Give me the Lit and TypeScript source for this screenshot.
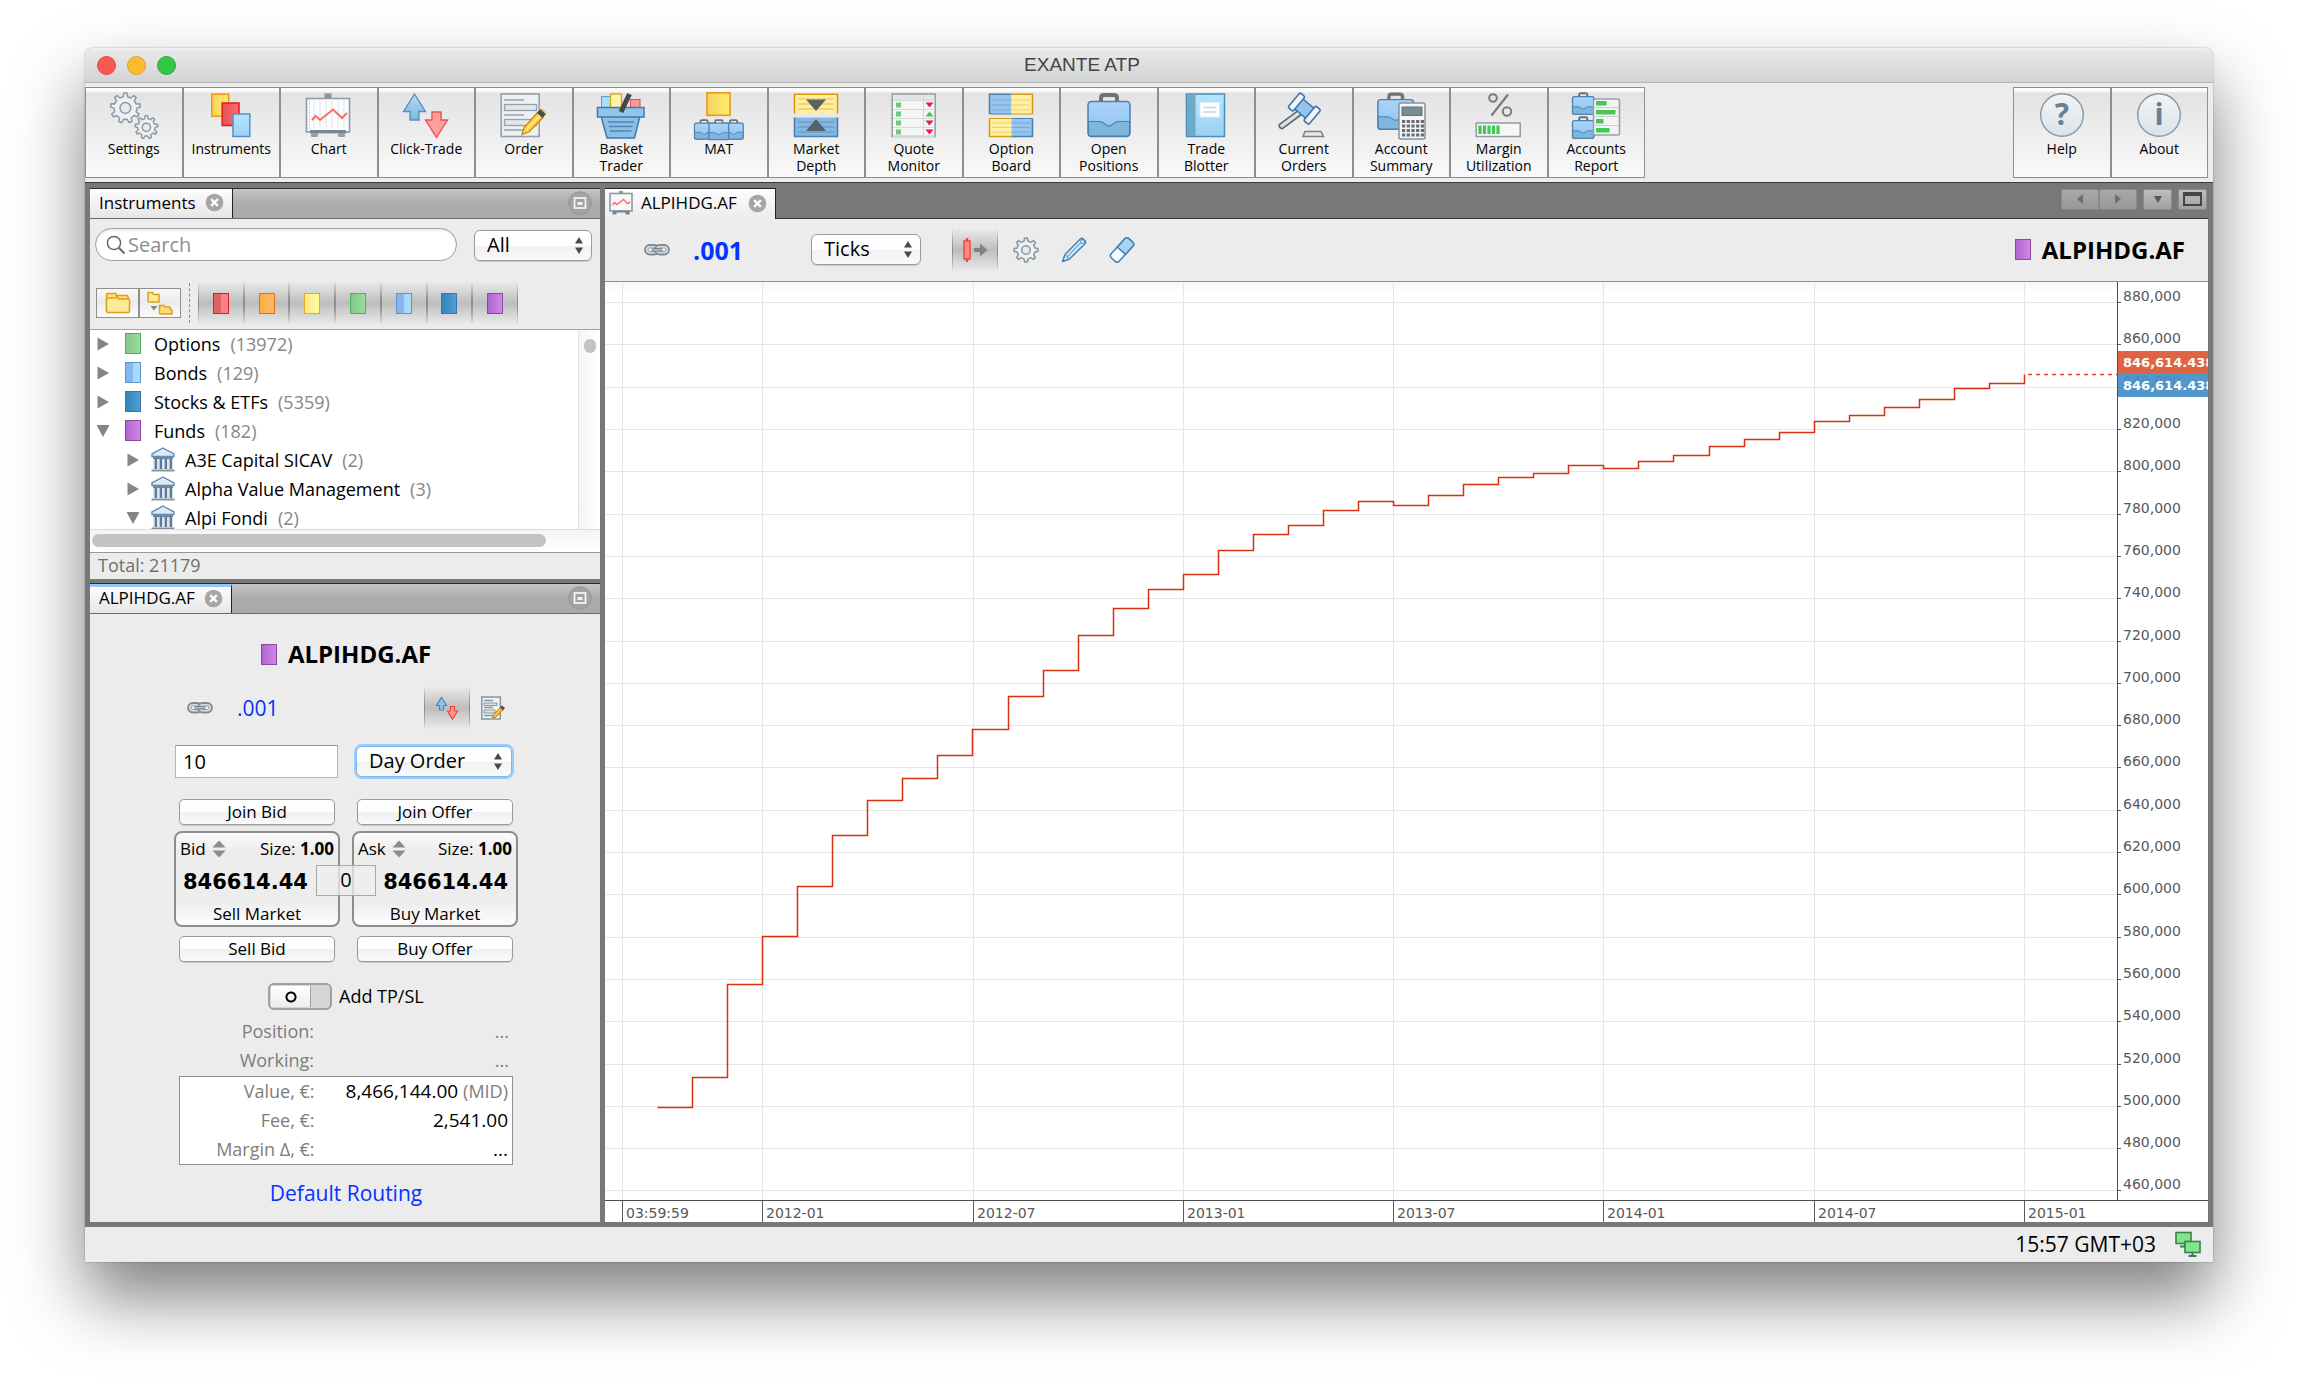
import { LitElement, html, svg, css } from "lit";
import { customElement, state } from "lit/decorators.js";
import { classMap } from "lit/directives/class-map.js";
import { styleMap } from "lit/directives/style-map.js";

/* ---------- icon helpers ---------- */

const gearPath = (cx: number, cy: number, r: number, teeth: number): string => {
  const inner = r * 0.76;
  const step = (Math.PI * 2) / teeth;
  let d = "";
  for (let i = 0; i < teeth; i++) {
    const a = i * step - Math.PI / 2;
    const pts: [number, number][] = [
      [inner, a - step * 0.27],
      [r, a - step * 0.15],
      [r, a + step * 0.15],
      [inner, a + step * 0.27],
    ];
    pts.forEach(([rad, ang], k) => {
      const x = (cx + rad * Math.cos(ang)).toFixed(2);
      const y = (cy + rad * Math.sin(ang)).toFixed(2);
      d += i === 0 && k === 0 ? `M${x} ${y}` : k === 0 ? `A${inner} ${inner} 0 0 1 ${x} ${y}` : `L${x} ${y}`;
    });
  }
  return d + "Z";
};

const gear = (cx: number, cy: number, r: number, teeth: number, w = 1.5) => svg`
  <path d=${gearPath(cx, cy, r, teeth)} fill="#eef1f3" stroke="#8b9aa5" stroke-width=${w} stroke-linejoin="round"/>
  <circle cx=${cx} cy=${cy} r=${r * 0.36} fill="#e9e9e9" stroke="#8b9aa5" stroke-width=${w}/>`;

const clickArrows = svg`
  <path d="M12.5 2 23.5 19.5H17V28H8V19.5H1.5Z" fill="url(#gBlueArrow)" stroke="#5b8fb9" stroke-width="1.4"/>
  <path d="M34.5 45.5 45.5 28H39V20H30V28H23.5Z" fill="#ffa0a0" stroke="#f0504c" stroke-width="1.4"/>`;

const orderSheet = svg`
  <rect x="1.2" y="2" width="38" height="42.5" fill="#eef0f1" stroke="#93a2ad" stroke-width="1.6"/>
  <path d="M4 8H24M4 23H24M4 38H24" stroke="#93a2ad" stroke-width="1.6"/>
  <rect x="4.5" y="12.5" width="32" height="6" fill="#e2e6e9" stroke="#93a2ad" stroke-width="1.3"/>
  <rect x="4.5" y="27.5" width="32" height="6" fill="#e2e6e9" stroke="#93a2ad" stroke-width="1.3"/>
  <path d="M22 42.5 24 35.5 37.5 20.5 43 25.5 29 40Z" fill="#fbd04a" stroke="#c08d14" stroke-width="1.3"/>
  <path d="M26.5 38 40.2 23" stroke="#fff0a0" stroke-width="1.2"/>
  <path d="M37 21 40.5 17 46 22 42.5 26Z" fill="#4b4b4b"/>
  <path d="M41.5 17 45.5 21" stroke="#e9b93a" stroke-width="1.6"/>`;

const chartBoard = svg`
  <rect x="19.5" y="1.5" width="7" height="6" fill="#8796a0"/>
  <rect x="1.5" y="6.5" width="43" height="33.5" fill="#fdfdfd" stroke="#8d9ca7" stroke-width="1.6"/>
  <path d="M9 8.5V37M15 8.5V37M21 8.5V37M27 8.5V37M33 8.5V37M39 8.5V37" stroke="#e0e3e6" stroke-width="1"/>
  <path d="M4.5 8.5V37" stroke="#9aa7b0" stroke-width="1" stroke-dasharray="1 2"/>
  <path d="M7 28 10.5 24 15 28 28 17.5 37 26 42 21" fill="none" stroke="#ff6b66" stroke-width="2"/>
  <rect x="5" y="38" width="36" height="3.4" fill="#79868f"/>
  <rect x="6" y="41" width="7" height="4" rx="1" fill="#93a0a9"/>
  <rect x="33" y="41" width="7" height="4" rx="1" fill="#93a0a9"/>`;

/* Bolder cuts of the three icons above, for the 24px size. */
const smallArrows = svg`
  <path d="M6.500 1.500 11.500 9.500H8.500V14H4.500V9.500H1.500Z" fill="#8fc3e8" stroke="#4f86b5" stroke-width="1.200"/>
  <path d="M17.500 23 22.500 15H19.500V10.500H15.500V15H12.500Z" fill="#ff9c98" stroke="#ee3f3a" stroke-width="1.200"/>`;

const smallSheet = svg`
  <rect x="0.800" y="1" width="18.500" height="22" fill="#f0f2f3" stroke="#8596a2" stroke-width="1.500"/>
  <path d="M3 4.500H12M3 11.500H12M3 19.500H12" stroke="#8596a2" stroke-width="1.300"/>
  <path d="M3 7H16V9.500H3ZM3 14H14V17H3Z" fill="#dfe4e7" stroke="#8596a2" stroke-width="1"/>
  <path d="M11.500 22 12.500 18.500 19.500 11.500 22 14 15 21Z" fill="#f7bd33" stroke="#b58414" stroke-width="1"/>
  <path d="M19 11.500 21 9.500 24 12 22 14.500Z" fill="#4f4f4f"/>`;

const smallBoard = svg`
  <rect x="10" y="0" width="4" height="3" fill="#8796a0"/>
  <rect x="1" y="2.500" width="22" height="17.500" fill="#f8f8f8" stroke="#8d9ca7" stroke-width="1.600"/>
  <path d="M3.500 14 5.500 11.500 8 13.500 14.500 8.500 18.500 12.500 21 11" fill="none" stroke="#ff7069" stroke-width="1.500"/>
  <path d="M3.500 20.500H20.500" stroke="#79868f" stroke-width="2"/>
  <path d="M3.500 21H7.500V23.500H3.500ZM16.500 21H20.500V23.500H16.500Z" fill="#79868f"/>`;

const briefcase = (x: number, y: number, s: number, w: number) => svg`
  <g transform="translate(${x} ${y}) scale(${s})">
    <path d="M14 9V5.5Q14 2.5 17 2.5H27Q30 2.5 30 5.5V9" fill="none" stroke="#6f7376" stroke-width="4"/>
    <rect x="1" y="9" width="42" height="35" rx="3.5" fill="url(#gCase)" stroke="#4f7fb0" stroke-width=${w}/>
    <path d="M1.5 29H12Q16 29 18.5 32 22 35 25.500 32 28 29 32 29H42.500V41Q42 43.500 39.500 43.500H4.500Q1.500 43.500 1.500 41Z"
      fill="#7fb6dd" stroke="#4f7fb0" stroke-width=${w * 0.7}/>
  </g>`;

const glass = (glyph: string, size: number) => svg`
  <circle cx="24" cy="23" r="21.300" fill="url(#gGlass)" stroke="#8599a6" stroke-width="1.4"/>
  <text x="24" y="33" text-anchor="middle" font-family="Open Sans, sans-serif" font-weight="700" font-size=${size} fill="#678093">${glyph}</text>`;

const quoteRows = [1, 0, 1, 1].map((down, i) => {
  const y = 13 + i * 9;
  return svg`<rect x="6" y=${y - 2.500} width="5" height="5" fill="#6fc97a"/>
    <path d=${down ? `M35.500 ${y - 2.500}h8l-4 5z` : `M35.500 ${y + 2.500}h8l-4 -5z`} fill=${down ? "#f0134f" : "#45c158"}/>
    <path d="M3 ${y + 4.500}H45" stroke="#d2d7db" stroke-width="1"/>`;
});

const calcKeys = [0, 1, 2, 3].flatMap((r) =>
  [0, 1, 2, 3, 4].map((c) => svg`<rect x=${25 + c * 4.700} y=${28 + r * 4.500} width="3.200" height="3" fill="#666b70"/>`)
);

const toolIcons: Record<string, unknown> = {
  settings: svg`${gear(15.4, 16, 15, 9)}${gear(36.4, 35.3, 11.5, 9)}`,
  instruments: svg`
    <rect x="4.800" y="2.200" width="16.800" height="22" fill="url(#gYellow)" stroke="#f0960f" stroke-width="1.500"/>
    <rect x="15.200" y="11" width="16.800" height="22.500" fill="url(#gRed)" stroke="#dc1c1c" stroke-width="1.500"/>
    <rect x="26" y="22" width="16.800" height="22.500" fill="url(#gSky)" stroke="#5b8cc4" stroke-width="1.500"/>`,
  chart: chartBoard,
  click: clickArrows,
  order: orderSheet,
  basket: svg`
    <rect x="4.500" y="4.500" width="9" height="13" fill="#a9def8" stroke="#5aa0cf"/>
    <rect x="13.500" y="2" width="11" height="15" fill="#fff3a8" stroke="#d9a410" stroke-width="1.300"/>
    <rect x="33.500" y="7.500" width="9.500" height="10" fill="#ff9a9a" stroke="#e04848"/>
    <path d="M4 24H43L37.500 46H10Z" fill="#8dbfe5" stroke="#3f79ad" stroke-width="1.500"/>
    <rect x="0.500" y="15.500" width="46.500" height="9.500" fill="#93c5ea" stroke="#3f79ad" stroke-width="1.500"/>
    <path d="M11 30H37M12 34.500H35.500M13 39H34.500" stroke="#4b86b8" stroke-width="1.300"/>
    <path d="M32.500 2 24 20" stroke="#45484b" stroke-width="5"/>`,
  mat: svg`
    <rect x="12" y="0.800" width="23" height="22.500" fill="url(#gYellow)" stroke="#f0960f" stroke-width="1.600"/>
    ${briefcase(-1, 27, 0.46, 2.6)}${briefcase(28.500, 27, 0.46, 2.6)}${briefcase(13.500, 27, 0.470, 2.6)}`,
  depth: svg`
    <rect x="2.500" y="2" width="43" height="19.500" fill="#ffef9e"/>
    <path d="M2.500 21.500V2.200H45.500V21.500" fill="none" stroke="#d79b12" stroke-width="1.600"/>
    <path d="M6 7H42M6 12H42M6 17H42" stroke="#e6b94a" stroke-width="1"/>
    <rect x="2.500" y="25.500" width="43" height="19" fill="#86b9e0"/>
    <path d="M2.500 25.500V44.500H45.500V25.500" fill="none" stroke="#4d81ab" stroke-width="1.600"/>
    <path d="M6 30H42M6 35H42M6 40H42" stroke="#5b93c2" stroke-width="1"/>
    <path d="M14 7.500H34L24 19ZM14 39H34L24 27Z" fill="#566168"/>`,
  quote: svg`
    <rect x="2.200" y="2" width="43" height="42.500" fill="#f4f5f5" stroke="#93a2ad" stroke-width="1.600"/>
    <rect x="3.500" y="3" width="40.500" height="5.500" fill="#e1e5e8"/>
    <path d="M3 8.500H45M33.500 3V44" stroke="#d2d7db" stroke-width="1"/>
    ${quoteRows}`,
  option: svg`
    <rect x="2.500" y="2" width="22" height="20" fill="#97c5ee"/><rect x="24.500" y="2" width="21" height="20" fill="#fff0a3"/>
    <rect x="2.500" y="26.500" width="22" height="18" fill="#fff0a3"/><rect x="24.500" y="26.500" width="21" height="18" fill="#97c5ee"/>
    <path d="M5 8H24M5 13H24M5 18H24M25 31H43M25 35.500H43M25 40H43" stroke="#74a9da" stroke-width="1"/>
    <path d="M25 8H43M25 13H43M25 18H43M5 31H24M5 35.500H24M5 40H24" stroke="#ead06f" stroke-width="1"/>
    <path d="M2.500 22V2.200H24.500M24.500 44.500H45.500V26.500" fill="none" stroke="#4d81ab" stroke-width="1.600"/>
    <path d="M24.500 2.200H45.500V22M2.500 26.500V44.500H24.500" fill="none" stroke="#d79b12" stroke-width="1.600"/>
    <path d="M2.500 22H24.500M24.500 26.500H45.500" stroke="#4d81ab"/><path d="M24.500 22H45.500M2.500 26.500H24.500" stroke="#d79b12"/>`,
  positions: briefcase(2, 0.500, 1, 1.5),
  blotter: svg`
    <rect x="4.500" y="2" width="38" height="42.500" fill="url(#gSky)" stroke="#4b8db6" stroke-width="1.500"/>
    <rect x="5" y="2.500" width="8.500" height="41.500" fill="#6fa9c8"/>
    <rect x="18" y="10.500" width="19.500" height="14.500" fill="#fff" stroke="#d8ecf7"/>
    <path d="M21 15.500H34.500M21 20H34.500" stroke="#d0d4d6" stroke-width="1.500"/>`,
  orders: svg`
    <g transform="rotate(40 24 17)">
      <path d="M21 22 20.500 46Q23 48.500 25.500 46L26 22Z" transform="rotate(12 23 20)" fill="#dfe3e7" stroke="#5d6871" stroke-width="1.700"/>
      <rect x="16" y="10" width="16" height="13" fill="#93c4ee" stroke="#3d74ad" stroke-width="1.500"/>
      <rect x="10.500" y="7" width="6.500" height="19" rx="1.500" fill="#f1f5f9" stroke="#3d74ad" stroke-width="1.600"/>
      <rect x="31" y="7" width="6.500" height="19" rx="1.500" fill="#f1f5f9" stroke="#3d74ad" stroke-width="1.600"/>
    </g>
    <path d="M25 39.500H41L43.500 44.500H23Z" fill="#e6e8ea" stroke="#77818a" stroke-width="1.500"/>`,
  summary: svg`
    ${briefcase(0, 0, 0.850, 1.7)}
    <rect x="22" y="11" width="26" height="36" rx="2" fill="#f5f5f5" stroke="#84929c" stroke-width="1.500"/>
    <rect x="25" y="15" width="20" height="8.500" fill="#768e92" stroke="#5f7478"/>
    ${calcKeys}`,
  margin: svg`
    <path d="M33 2.500 16.500 23.500" stroke="#7a7a7a" stroke-width="2.200"/>
    <circle cx="18" cy="6" r="3.800" fill="none" stroke="#7a7a7a" stroke-width="2"/>
    <circle cx="32" cy="19.500" r="4.200" fill="none" stroke="#7a7a7a" stroke-width="2"/>
    <rect x="1.200" y="31" width="44" height="13.500" fill="#f7f7f7" stroke="#8d9ca7" stroke-width="1.500"/>
    <path d="M5 33.500V42M9.500 33.500V42M14 33.500V42M18.500 33.500V42M23 33.500V42" stroke="#40c94e" stroke-width="3.200"/>`,
  report: svg`
    ${briefcase(0, 0, 0.510, 2.6)}${briefcase(0, 24, 0.510, 2.6)}
    <rect x="21.500" y="7" width="26" height="36" rx="2" fill="#f3f3f3" stroke="#93a2ad" stroke-width="1.600"/>
    <path d="M22.500 15.500H47M22.500 24.500H47M22.500 33.500H47" stroke="#c9ced2"/>
    <path d="M24 11.200H34.500M24 20.200H43.500M24 29.300H31.500M24 38.300H37.500" stroke="#45c853" stroke-width="4.500"/>`,
  help: glass("?", 30),
  about: glass("i", 30),
};

const icon48 = (body: unknown) =>
  html`<svg class="icon48" viewBox="0 0 48 48" aria-hidden="true">${body}</svg>`;

const icon24 = (body: unknown) =>
  html`<svg class="icon24" viewBox="0 0 24 24" aria-hidden="true">${body}</svg>`;

const linkIcon = html`<svg class="link-icon" viewBox="0 0 26 14" aria-hidden="true">
  <rect x="1" y="2" width="14" height="9.500" rx="4.700" fill="#dadddf" stroke="#7c8b96" stroke-width="1.800"/>
  <rect x="4" y="5" width="8" height="3.500" rx="1.700" fill="#f5f5f5" stroke="#8e9ba5"/>
  <rect x="11" y="2" width="14" height="9.500" rx="4.700" fill="#dadddf" stroke="#7c8b96" stroke-width="1.800"/>
  <rect x="14" y="5" width="8" height="3.500" rx="1.700" fill="#f5f5f5" stroke="#8e9ba5"/>
  <rect x="8" y="5.500" width="10" height="2.600" rx="1.300" fill="#b5bec3" stroke="#75848f"/>
</svg>`;

const closeIcon = html`<svg class="close-icon" viewBox="0 0 20 20" aria-hidden="true">
  <circle cx="10" cy="10" r="9.300" fill="#a6a6a6"/>
  <path d="M6.500 6.500 13.500 13.500M13.500 6.500 6.500 13.500" stroke="#fff" stroke-width="2.400"/>
</svg>`;

const minimizeIcon = html`<svg class="min-icon" viewBox="0 0 24 24" aria-hidden="true">
  <circle cx="12" cy="12" r="11.300" fill="#a3a3a3" stroke="#969696"/>
  <rect x="6.500" y="7" width="11" height="10" fill="none" stroke="#f2f2f2" stroke-width="1.800"/>
  <rect x="9.500" y="11" width="5" height="3" fill="#f2f2f2"/>
</svg>`;

const swatch = (kind: string) => html`<span class="swatch ${kind}"></span>`;

const bankIcon = html`<svg class="bank-icon" viewBox="0 0 24 25" aria-hidden="true">
  <path d="M12 1 23 7V9.500H1V7Z" fill="#dceaf6" stroke="#5f88b3" stroke-width="1.400"/>
  <rect x="2" y="9.500" width="20" height="2.600" fill="#6f8aa6"/>
  <path d="M4.500 11.500V22M9.500 11.500V22M14.500 11.500V22M19.500 11.500V22" stroke="#5d7a99" stroke-width="3.400"/>
  <path d="M3.500 12V22M8.500 12V22M13.500 12V22M18.500 12V22" stroke="#b9c8d8" stroke-width="1"/>
  <path d="M0.500 23.500H23.500" stroke="#84929f" stroke-width="2"/>
</svg>`;

/* ---------- data ---------- */

const TOOLS: [string, string[]][] = [
  ["settings", ["Settings"]],
  ["instruments", ["Instruments"]],
  ["chart", ["Chart"]],
  ["click", ["Click-Trade"]],
  ["order", ["Order"]],
  ["basket", ["Basket", "Trader"]],
  ["mat", ["MAT"]],
  ["depth", ["Market", "Depth"]],
  ["quote", ["Quote", "Monitor"]],
  ["option", ["Option", "Board"]],
  ["positions", ["Open", "Positions"]],
  ["blotter", ["Trade", "Blotter"]],
  ["orders", ["Current", "Orders"]],
  ["summary", ["Account", "Summary"]],
  ["margin", ["Margin", "Utilization"]],
  ["report", ["Accounts", "Report"]],
];

const HELP_TOOLS: [string, string[]][] = [
  ["help", ["Help"]],
  ["about", ["About"]],
];

const FILTERS = ["red", "orange", "yellow", "green", "sky", "blue", "purple"];

interface TreeNode { name: string; count: number; kind: string; level: number; open: boolean; }

const TREE: TreeNode[] = [
  { name: "Options", count: 13972, kind: "green", level: 0, open: false },
  { name: "Bonds", count: 129, kind: "sky", level: 0, open: false },
  { name: "Stocks & ETFs", count: 5359, kind: "blue", level: 0, open: false },
  { name: "Funds", count: 182, kind: "purple", level: 0, open: true },
  { name: "A3E Capital SICAV", count: 2, kind: "bank", level: 1, open: false },
  { name: "Alpha Value Management", count: 3, kind: "bank", level: 1, open: false },
  { name: "Alpi Fondi", count: 2, kind: "bank", level: 1, open: true },
];

/* Chart geometry, in the units of the plot's viewBox. */
const PLOT_W = 1512;
const PLOT_H = 918;
const priceY = (thousands: number) => 20.6 + (880 - thousands) * 2.1152;
const PRICE_TICKS = Array.from({ length: 22 }, (_, i) => 880 - i * 20);
const TIME_TICKS: [number, string][] = [
  [17, "03:59:59"], [157, "2012-01"], [368, "2012-07"], [578, "2013-01"],
  [788, "2013-07"], [998, "2014-01"], [1209, "2014-07"], [1419, "2015-01"],
];
const LEVELS = [
  825, 795, 702, 654, 604, 553, 518, 496, 473, 447, 414, 388, 353, 326, 307, 292, 268, 252, 243, 228,
  219, 223, 213, 202, 195, 191, 183, 186, 179, 173, 164, 157, 150, 139, 133, 125, 117, 106, 101,
];
const LAST_LEVEL = 92;
const STEP = (1419 - 52) / LEVELS.length;
const seriesPath = () => {
  let d = "";
  LEVELS.forEach((y, i) => {
    const x0 = Math.round(52 + i * STEP) + 0.5;
    const x1 = Math.round(52 + (i + 1) * STEP) + 0.5;
    d += `${i === 0 ? "M" : "L"}${x0} ${y + 0.5}L${x1} ${y + 0.5}`;
  });
  return `${d}L1419.500 ${LAST_LEVEL + 0.5}`;
};

@customElement("app-root")
export class AppRoot extends LitElement {
  static styles = css`
    :host {
      display: block;
      font-family: "Open Sans", "Noto Sans", sans-serif;
      font-size: 18px;
      color: #000;
    }
    * { box-sizing: border-box; }
    button, input, select { font: inherit; color: inherit; margin: 0; }
    button { padding: 0; border: 0; background: none; cursor: default; }
    svg { display: block; flex: none; }
    .defs { position: absolute; width: 0; height: 0; }

    .desktop {
      display: flex;
      min-height: 100vh;
      padding: 48px 85px 122px;
      background: #fff;
      overflow: hidden;
    }
    .window {
      flex: 1;
      min-width: 0;
      display: flex;
      flex-direction: column;
      background: #ececec;
      border-radius: 8px 8px 0 0;
      box-shadow: 0 0 2px rgba(0, 0, 0, 0.35), 0 36px 68px rgba(0, 0, 0, 0.5);
    }

    .titlebar {
      display: grid;
      grid-template-columns: 1fr auto 1fr;
      align-items: center;
      height: 35px;
      padding: 0 146px 0 12px;
      border-bottom: 1px solid #b4b4b4;
      border-radius: 8px 8px 0 0;
      background: linear-gradient(#f2f2f2, #e8e8e8 10%, #d3d3d3);
    }
    .lights { display: flex; gap: 11px; }
    .light { width: 19px; height: 19px; border-radius: 50%; border: 1px solid; }
    .light.close { background: #fc5753; border-color: #df4744; }
    .light.mini { background: #fdbc2f; border-color: #de9f34; }
    .light.zoom { background: #33c748; border-color: #27aa35; }
    .title { margin: 0; font: 400 19px/24px "Liberation Sans", Arial, sans-serif; color: #444; }

    .toolbar {
      display: flex;
      justify-content: space-between;
      padding: 4px 5px 4px 0;
    }
    .tools { display: grid; grid-auto-flow: column; grid-auto-columns: 1fr; }
    .tools.main { width: 1560px; }
    .tools.aux { width: 195px; }
    .tool {
      display: flex;
      flex-direction: column;
      align-items: center;
      height: 91px;
      padding-top: 4px;
      border: 1px solid #8f8f8f;
      background: linear-gradient(#fcfcfc, #fcfcfc 3px, #e3e3e3 5px, #f9f9f9);
      font-size: 14px;
      line-height: 17px;
    }
    .tool span { display: block; }
    .icon48 { width: 48px; height: 48px; overflow: visible; }
    .icon24 { width: 24px; height: 24px; overflow: visible; }

    .dock {
      flex: 1;
      display: grid;
      grid-template-columns: 510px minmax(0, 1fr);
      gap: 5px;
      padding: 5px;
      border-top: 1px solid #3c3c3c;
      background: #787878;
    }
    .side { display: flex; flex-direction: column; gap: 4px; }
    .panel { display: flex; flex-direction: column; background: #ececec; min-width: 0; }
    .panel.trade { flex: 1; }

    .strip {
      display: flex;
      align-items: stretch;
      justify-content: space-between;
      height: 31px;
      border-top: 1px solid #2e2e2e;
      border-bottom: 1px solid #6c6c6c;
      background: linear-gradient(#c6c6c6, #adadad 45%, #a9a9a9);
      padding-right: 8px;
    }
    .strip.dark { border-top: 0; border-bottom-color: #333; background: #787878; padding-right: 1px; }
    .tab {
      display: flex;
      align-items: center;
      gap: 9px;
      padding: 0 8px 2px 9px;
      border-right: 1px solid #222;
      background: linear-gradient(#fdfdfd, #e6e6e6);
      font-size: 17px;
      line-height: 24px;
    }
    .tab.active { border-top: 3px solid #97c4fb; padding-bottom: 4px; }
    .strip.dark .tab {
      gap: 8px;
      padding: 0 8px 2px 4px;
      margin-bottom: -1px;
      border-top: 1px solid #222;
      background: linear-gradient(#fdfdfd, #ececec);
    }
    .strip.dark .close-icon { margin-left: 3px; }
    .close-icon { width: 19px; height: 19px; }
    .min-icon { width: 24px; height: 24px; }
    .strip > button { align-self: center; padding-bottom: 2px; }

    .nav { display: flex; align-items: center; gap: 6px; padding-bottom: 8px; }
    .nav-pair { display: flex; }
    .nav-button {
      display: grid;
      place-items: center;
      width: 29px;
      height: 21px;
      border: 1px solid #8a8a8a;
      border-radius: 2px;
      background: linear-gradient(#bdbdbd, #a2a2a2);
      color: #555;
    }
    .nav-pair .nav-button { width: 38px; color: #6f6f6f; background: linear-gradient(#a8a8a8, #989898); }

    .find { display: flex; align-items: flex-end; gap: 17px; padding: 9px 8px 0 5px; }
    .search {
      flex: 1;
      display: flex;
      align-items: center;
      gap: 2px;
      height: 33px;
      padding: 0 14px 0 10px;
      border: 1px solid #9f9f9f;
      border-radius: 17px;
      background: #fff;
      box-shadow: inset 0 2px 2px rgba(0, 0, 0, 0.08);
    }
    .search input { flex: 1; min-width: 0; border: 0; outline: 0; padding: 0; background: none; font-size: 20px; line-height: 28px; }
    .search input::placeholder { color: #8e8e8e; opacity: 1; }

    .combo { position: relative; display: flex; }
    .combo select {
      appearance: none;
      width: 100%;
      height: 31px;
      padding: 0 30px 3px 12px;
      border: 1px solid #9b9b9b;
      border-radius: 6px;
      background: linear-gradient(#fff, #fdfdfd 50%, #f1f1f1 52%, #fafafa);
      box-shadow: 0 1px 1px rgba(0, 0, 0, 0.15);
      font-size: 20px;
      outline: 0;
    }
    .combo svg { position: absolute; right: 8px; top: 7px; width: 10px; height: 17px; pointer-events: none; }
    .combo.all { width: 118px; }
    .combo.ticks { width: 110px; }
    .combo.day { width: 160px; padding: 2px; }
    .combo.day select { border-color: #7db5ee; box-shadow: 0 0 0 2px #9ccbfa; }
    .combo.day svg { right: 11px; top: 9px; }

    .filters { display: flex; align-items: center; padding: 20px 0 4px 6px; border-bottom: 1px solid #a2a2a2; }
    .folder-button {
      display: grid;
      place-items: center;
      width: 43px;
      height: 30px;
      border: 1px solid #8f8f8f;
      background: linear-gradient(#f8f8f8, #ececec 45%, #fbfbfb);
    }
    .folder-button + .folder-button { width: 42px; }
    .dots { width: 1px; height: 40px; margin: 0 8px; border-left: 1px dashed #8a8a8a; }
    .swatches { display: grid; grid-template-columns: repeat(7, 1fr); width: 320px; }
    .toggle {
      display: grid;
      place-items: center;
      height: 44px;
      background:
        linear-gradient(rgba(120, 120, 120, 0), #8d8d8d 45%, #8d8d8d 55%, rgba(120, 120, 120, 0)) left / 1px 100% no-repeat,
        linear-gradient(rgba(120, 120, 120, 0), #8d8d8d 45%, #8d8d8d 55%, rgba(120, 120, 120, 0)) right / 1px 100% no-repeat,
        linear-gradient(#ececec, #bdbdbd 50%, #ececec);
    }
    .toggle.single { width: 46px; }
    .swatch { display: block; flex: none; width: 16px; height: 21px; border: 1px solid; }
    .swatch.red { background: linear-gradient(90deg, #e16265 45%, #fd8285 55%); border-color: #dc1c22; }
    .swatch.orange { background: linear-gradient(90deg, #ffa849, #ffba66); border-color: #ee6a12; }
    .swatch.yellow { background: linear-gradient(90deg, #ffe98a, #fffd95); border-color: #eda61c; }
    .swatch.green { background: linear-gradient(90deg, #83c888, #99dc9e); border-color: #4fae60; }
    .swatch.sky { background: linear-gradient(90deg, #80b9ee 45%, #a9d9ff 55%); border-color: #6392c8; }
    .swatch.blue { background: linear-gradient(90deg, #2f87b9, #519fd0); border-color: #3a74ac; }
    .swatch.purple { background: linear-gradient(90deg, #b064cd, #cf88e6); border-color: #8b479e; }

    .tree-area { display: grid; grid-template-columns: 1fr 22px; background: #fff; }
    .tree { height: 199px; overflow: hidden; margin: 0; padding: 0; list-style: none; }
    .node { display: flex; align-items: center; height: 29px; padding: 0 0 2px 7px; line-height: 26px; }
    .node .arrow { width: 12px; height: 14px; }
    .node .mark { display: grid; place-items: center; width: 16px; margin: 0 13px 0 16px; }
    .node.child { padding-left: 37px; }
    .node.child .mark { width: 24px; margin: 0 10px 0 12px; }
    .bank-icon { width: 24px; height: 25px; }
    .count { margin-left: 10px; color: #868686; }
    .vbar { border-left: 1px solid #e2e2e2; background: linear-gradient(90deg, #f4f4f4, #fff); padding: 9px 5px; }
    .vthumb { width: 12px; height: 14px; border-radius: 6px; background: #c3c3c3; }
    .hbar { height: 23px; border-top: 1px solid #dcdcdc; background: linear-gradient(#f4f4f4, #fff); padding: 4px 2px; }
    .hthumb { width: 454px; height: 13px; border-radius: 7px; background: #c3c3c3; }
    .total { height: 27px; border-top: 1px solid #999; padding-left: 8px; color: #6f6f6f; line-height: 25px; }

    .ticket { display: flex; flex-direction: column; align-items: center; padding: 22px 0 12px 2px; }
    .symbol { display: flex; align-items: center; gap: 11px; margin: 0; font-size: 24px; line-height: 36px; font-weight: 700; }
    .ticket-body { display: flex; flex-direction: column; width: 344px; }
    .account { display: flex; align-items: center; margin-top: 14px; padding: 0 13px; }
    .account .acct { margin: 0 auto 0 24px; font-size: 21px; line-height: 30px; }
    .account .sheet { margin-left: 11px; }
    a { color: #0433ff; text-decoration: none; }
    .link-icon { width: 26px; height: 14px; }
    .size-row { display: flex; justify-content: space-between; align-items: center; margin-top: 14px; padding: 0 4px 0 1px; }
    .size-row > input {
      width: 163px;
      height: 33px;
      padding: 0 7px;
      border: 1px solid #b4b4b4;
      border-top-color: #909090;
      background: #fff;
      font-size: 20px;
      outline: 0;
    }
    .pair { display: grid; grid-template-columns: 156px 156px; column-gap: 22px; justify-content: center; }
    .pair.join { margin-top: 20px; }
    .pair.hit { margin-top: 9px; }
    .push {
      height: 26px;
      border: 1px solid #9b9b9b;
      border-radius: 5px;
      background: linear-gradient(#fff, #fdfdfd 50%, #f0f0f0 52%, #fafafa);
      box-shadow: 0 1px 1px rgba(0, 0, 0, 0.15);
      font-size: 17px;
      line-height: 22px;
    }
    .quotes { position: relative; display: grid; grid-template-columns: 1fr 1fr; gap: 12px; margin-top: 6px; }
    .quote {
      display: flex;
      flex-direction: column;
      height: 96px;
      padding: 4px 4px;
      border: 2px solid #8d8d8d;
      border-radius: 8px;
      background: linear-gradient(#fbfbfb, #ededed 20%, #ededed 75%, #fdfdfd);
      font-size: 17px;
      line-height: 24px;
      text-align: center;
    }
    .quote .head { display: flex; align-items: center; gap: 6px; }
    .quote .head .size { margin-left: auto; }
    .quote .price { padding: 6px 4px 5px 3px; font: 700 21px/30px "DejaVu Sans", sans-serif; text-align: left; }
    .quote.ask .price { text-align: right; }
    .spread {
      position: absolute;
      left: 142px;
      top: 34px;
      width: 60px;
      height: 31px;
      border: 1px solid #a9a9a9;
      background: rgba(238, 238, 238, 0.75);
      font-size: 20px;
      line-height: 28px;
      text-align: center;
    }
    .tpsl { display: flex; align-items: center; gap: 7px; margin: 21px 0 0 94px; line-height: 27px; }
    .tpsl input {
      appearance: none;
      width: 64px;
      height: 27px;
      border: 2px solid #a0a0a0;
      border-radius: 6px;
      background:
        radial-gradient(circle at 21px 12px, transparent 3px, #000 4px, #000 5px, transparent 6px),
        linear-gradient(#fff, #ececec) 1px 1px / 39px 21px no-repeat,
        linear-gradient(#a0a0a0, #a0a0a0) 40px 1px / 1px 21px no-repeat,
        #d6d6d6;
    }
    .facts { border-collapse: collapse; margin: 7px 5px 0; width: 334px; line-height: 28px; }
    .facts th, .facts td { height: 29px; padding: 0 0 1px; text-align: right; }
    .facts th { width: 135px; font-weight: 400; color: #7d7d7d; }
    .facts td { padding-right: 4px; font-size: 19px; }
    .facts .dim { font-size: 18px; color: #7d7d7d; }
    .facts.boxed { margin-top: 1px; border: 1px solid #909090; background: #fff; }
    .routing { margin-top: 14px; font-size: 21px; line-height: 28px; text-align: center; }

    .chart-panel { display: flex; flex-direction: column; min-width: 0; background: #fff; }
    .chart-bar {
      display: flex;
      align-items: center;
      height: 63px;
      padding: 0 23px 1px 39px;
      border-bottom: 1px solid #8f8f8f;
      background: #ececec;
    }
    .chart-bar .acct { margin: 0 68px 0 23px; font-size: 25px; line-height: 34px; font-weight: 700; }
    .chart-bar .toggle { margin-left: 31px; margin-right: 15px; }
    .chart-tools { display: flex; align-items: center; gap: 22px; }
    .chart-bar .symbol { margin-left: auto; }
    .plot { flex: 1; display: grid; grid-template-columns: minmax(0, 1fr) 91px; grid-template-rows: minmax(0, 1fr) 22px; }
    .canvas { display: block; width: 100%; height: 100%; background: linear-gradient(#f6f6f6, #fff 10px); }
    .canvas-cell { position: relative; min-height: 0; }
    .canvas-cell svg { position: absolute; inset: 0; }
    .prices { position: relative; border-left: 1px solid #4c4c4c; overflow: hidden; }
    .times { position: relative; grid-column: 1 / -1; border-top: 1px solid #4c4c4c; overflow: hidden; }
    .price-tick, .time-tick { position: absolute; font: 14px/20px "DejaVu Sans", sans-serif; color: #585858; }
    .price-tick { left: 0; height: 20px; padding-left: 5px; margin-top: -16px; }
    .price-tick::before { content: ""; position: absolute; left: 0; top: 16px; width: 3px; height: 1px; background: #5c5c5c; }
    .time-tick { top: 0; height: 22px; padding: 0 0 0 3px; border-left: 1px solid #5c5c5c; line-height: 24px; }
    .tag { position: absolute; left: 0; right: 0; height: 23px; padding-left: 5px; color: #fff; font: 700 13px/23px "DejaVu Sans", sans-serif; white-space: nowrap; }
    .tag.bid { background: #df6444; margin-top: -23px; }
    .tag.offer { background: rgba(66, 142, 196, 0.92); }

    .statusbar { display: flex; align-items: center; justify-content: flex-end; gap: 19px; height: 35px; padding: 0 12px 2px 0; font-size: 21px; line-height: 30px; }
  `;

  @state() private active = new Set(FILTERS);
  @state() private clickTrade = true;
  @state() private autoShift = true;

  private flip(kind: string) {
    const next = new Set(this.active);
    next.has(kind) ? next.delete(kind) : next.add(kind);
    this.active = next;
  }

  private tool([id, lines]: [string, string[]]) {
    return html`<button class="tool" type="button">
      ${icon48(toolIcons[id])}
      ${lines.map((l) => html`<span>${l}</span>`)}
    </button>`;
  }

  private combo(cls: string, label: string, options: string[]) {
    return html`<span class="combo ${cls}">
      <select aria-label=${label}>${options.map((o) => html`<option>${o}</option>`)}</select>
      <svg viewBox="0 0 10 17" aria-hidden="true"><path d="M1 6.500 5 0 9 6.500ZM1 10.500 5 17 9 10.500Z" fill="#4a4a4a"/></svg>
    </span>`;
  }

  private instruments() {
    return html`<section class="panel">
      <header class="strip">
        <div class="tab"><span>Instruments</span><button type="button" aria-label="Close Instruments">${closeIcon}</button></div>
        <button type="button" aria-label="Minimize Instruments">${minimizeIcon}</button>
      </header>
      <div class="find">
        <label class="search">
          <svg width="20" height="20" viewBox="0 0 20 20" aria-hidden="true">
            <circle cx="8" cy="8" r="6.600" fill="none" stroke="#666" stroke-width="1.500"/><path d="M13 13 18.500 18.500" stroke="#666" stroke-width="2"/>
          </svg>
          <input type="text" placeholder="Search" aria-label="Search instruments">
        </label>
        ${this.combo("all", "Exchange", ["All"])}
      </div>
      <div class="filters">
        <button class="folder-button" type="button" aria-label="Folders">
          <svg width="26" height="22" viewBox="0 0 26 22">
            <path d="M1.500 19V3Q1.500 1.500 3 1.500H10Q11.500 1.500 11.500 3.500H22Q23 3.500 23 5V7" fill="#ffe07a" stroke="#d9a21b" stroke-width="1.500"/>
            <path d="M1.500 7.500Q1.500 6 3 6H10L12 4.500 13.500 7H23.500Q24.500 7 24.500 8.500V19Q24.500 20.500 23 20.500H3Q1.500 20.500 1.500 19Z" fill="#ffe997" stroke="#d9a21b" stroke-width="1.500"/>
          </svg>
        </button>
        <button class="folder-button" type="button" aria-label="Expand folders">
          <svg width="26" height="26" viewBox="0 0 26 26">
            <path d="M1 11V2.500H5.500L6.500 4.500H12V12H2Q1 12 1 11Z" fill="#ffe997" stroke="#d9a21b" stroke-width="1.500"/>
            <path d="M12.500 23V15.500H17L18 17H23V19L25 20V24H13.500Q12.500 24 12.500 23Z" fill="#ffd97a" stroke="#d9a21b" stroke-width="1.500"/>
            <path d="M3.500 16H10.500L7 20.500Z" fill="#858585"/>
          </svg>
        </button>
        <span class="dots"></span>
        <div class="swatches">
          ${FILTERS.map((f) => html`<button type="button" aria-label="${f} filter" aria-pressed=${this.active.has(f)}
            class=${classMap({ toggle: this.active.has(f) })} @click=${() => this.flip(f)}>${swatch(f)}</button>`)}
        </div>
      </div>
      <div class="tree-area">
        <ul class="tree">
          ${TREE.map((n) => html`<li class=${classMap({ node: true, child: n.level === 1 })}>
            <svg class="arrow" viewBox="0 0 12 14" aria-hidden="true">
              <path d=${n.open ? "M-0.500 1H12.500L6 13Z" : "M0.500 0.500 12 7 0.500 13.500Z"} fill="#858585"/>
            </svg>
            <span class="mark">${n.kind === "bank" ? bankIcon : swatch(n.kind)}</span>
            <span>${n.name}</span><span class="count">(${n.count})</span>
          </li>`)}
        </ul>
        <div class="vbar"><div class="vthumb"></div></div>
      </div>
      <div class="hbar"><div class="hthumb"></div></div>
      <div class="total">Total: 21179</div>
    </section>`;
  }

  private quote(side: "Bid" | "Ask", action: string) {
    return html`<button type="button" class=${classMap({ quote: true, ask: side === "Ask" })}>
      <span class="head"><span>${side}</span>
        <svg width="14" height="18" viewBox="0 0 14 18" aria-hidden="true"><path d="M0.500 7.500 7 0.500 13.500 7.500ZM0.500 10.500 7 17.500 13.500 10.500Z" fill="#8c8c8c"/></svg>
        <span class="size">Size: <b>1.00</b></span>
      </span>
      <span class="price">846614.44</span>
      <span>${action}</span>
    </button>`;
  }

  private ticket() {
    return html`<section class="panel trade">
      <header class="strip">
        <div class="tab active"><span>ALPIHDG.AF</span><button type="button" aria-label="Close ALPIHDG.AF">${closeIcon}</button></div>
        <button type="button" aria-label="Minimize order panel">${minimizeIcon}</button>
      </header>
      <div class="ticket">
        <h2 class="symbol">${swatch("purple")}<span>ALPIHDG.AF</span></h2>
        <div class="ticket-body">
          <div class="account">
            ${linkIcon}<a class="acct" href="#account">.001</a>
            <button type="button" aria-label="Click-trade mode" aria-pressed=${this.clickTrade}
              class=${classMap({ toggle: this.clickTrade, single: true })}
              @click=${() => (this.clickTrade = !this.clickTrade)}>${icon24(smallArrows)}</button>
            <button class="sheet" type="button" aria-label="Order mode">${icon24(smallSheet)}</button>
          </div>
          <div class="size-row">
            <input type="text" aria-label="Quantity" .value=${"10"}>
            ${this.combo("day", "Duration", ["Day Order"])}
          </div>
          <div class="pair join">
            <button class="push" type="button">Join Bid</button>
            <button class="push" type="button">Join Offer</button>
          </div>
          <div class="quotes">
            ${this.quote("Bid", "Sell Market")}${this.quote("Ask", "Buy Market")}
            <div class="spread">0</div>
          </div>
          <div class="pair hit">
            <button class="push" type="button">Sell Bid</button>
            <button class="push" type="button">Buy Offer</button>
          </div>
          <label class="tpsl"><input type="checkbox"><span>Add TP/SL</span></label>
          <table class="facts">
            <tr><th scope="row">Position:</th><td class="dim">...</td></tr>
            <tr><th scope="row">Working:</th><td class="dim">...</td></tr>
          </table>
          <table class="facts boxed">
            <tr><th scope="row">Value, €:</th><td>8,466,144.00 <span class="dim">(MID)</span></td></tr>
            <tr><th scope="row">Fee, €:</th><td>2,541.00</td></tr>
            <tr><th scope="row">Margin Δ, €:</th><td>...</td></tr>
          </table>
          <a class="routing" href="#routing">Default Routing</a>
        </div>
      </div>
    </section>`;
  }

  private chart() {
    const pct = (v: number, total: number) => `${((v / total) * 100).toFixed(4)}%`;
    return html`<section class="chart-panel">
      <header class="strip dark">
        <div class="tab">${icon24(smallBoard)}<span>ALPIHDG.AF</span><button type="button" aria-label="Close chart">${closeIcon}</button></div>
        <div class="nav">
          <div class="nav-pair">
            <button class="nav-button" type="button" aria-label="Previous tab"><svg width="6" height="10"><path d="M6 0V10L0 5Z" fill="currentColor"/></svg></button>
            <button class="nav-button" type="button" aria-label="Next tab"><svg width="6" height="10"><path d="M0 0V10L6 5Z" fill="currentColor"/></svg></button>
          </div>
          <button class="nav-button" type="button" aria-label="Tab list"><svg width="8" height="7"><path d="M0 0H8L4 7Z" fill="currentColor"/></svg></button>
          <button class="nav-button" type="button" aria-label="Maximize"><svg width="19" height="14"><rect x="1" y="1" width="17" height="12" fill="none" stroke="#454545" stroke-width="2"/><path d="M1 3H18" stroke="#454545" stroke-width="2"/></svg></button>
        </div>
      </header>
      <div class="chart-bar">
        ${linkIcon}<a class="acct" href="#account">.001</a>
        ${this.combo("ticks", "Interval", ["Ticks"])}
        <button type="button" aria-label="Auto shift" aria-pressed=${this.autoShift}
          class=${classMap({ toggle: this.autoShift, single: true })} @click=${() => (this.autoShift = !this.autoShift)}>
          <svg width="26" height="26" viewBox="0 0 26 26">
            <path d="M5 1V25" stroke="#e84d45" stroke-width="2.500"/><rect x="2" y="4" width="6" height="18" fill="#ff8a80" stroke="#e84d45" stroke-width="1.500"/>
            <path d="M12 11H18V6.500L25.500 13 18 19.500V15H12Z" fill="#7c8285"/>
          </svg>
        </button>
        <div class="chart-tools">
          <button type="button" aria-label="Chart settings"><svg width="26" height="26" viewBox="0 0 26 26">${gear(13, 13, 12, 8, 1.6)}</svg></button>
          <button type="button" aria-label="Draw"><svg width="26" height="26" viewBox="0 0 26 26">
            <path d="M1.500 24.500 4 17.500 19.500 1.800Q21 0.800 22.500 2.200L24 3.700Q25.200 5 24.200 6.500L8.500 22Z" fill="#d5ebfa" stroke="#3f82b5" stroke-width="1.500" stroke-linejoin="round"/>
            <path d="M4 17.500 8.500 22M5.500 20.500 20.500 5" fill="none" stroke="#6fa9d2" stroke-width="1.200"/><circle cx="21.500" cy="4.500" r="1.800" fill="#fff" stroke="#3f82b5"/></svg></button>
          <button type="button" aria-label="Erase"><svg width="26" height="26" viewBox="0 0 26 26">
            <g transform="rotate(42 13 13)"><rect x="7.500" y="0" width="11" height="26" rx="3" fill="#f3f9fd" stroke="#3f82b5" stroke-width="1.500"/>
            <path d="M7.500 14H18.500V3Q18.500 0 15.500 0H10.500Q7.500 0 7.500 3Z" fill="#a8d4f2" stroke="#3f82b5" stroke-width="1.500"/></g></svg></button>
        </div>
        <h2 class="symbol">${swatch("purple")}<span>ALPIHDG.AF</span></h2>
      </div>
      <div class="plot">
        <div class="canvas-cell">
          <svg class="canvas" viewBox="0 0 ${PLOT_W} ${PLOT_H}" preserveAspectRatio="none" role="img" aria-label="ALPIHDG.AF price">
            ${PRICE_TICKS.map((p) => {
              const y = Math.floor(priceY(p)) + 0.5;
              return svg`<line x1="0" x2=${PLOT_W} y1=${y} y2=${y} stroke="#e6e6e6" vector-effect="non-scaling-stroke"/>`;
            })}
            ${TIME_TICKS.map(([x]) => svg`<line x1=${x + 0.5} x2=${x + 0.5} y1="0" y2=${PLOT_H} stroke="#e6e6e6" vector-effect="non-scaling-stroke"/>`)}
            <path d=${seriesPath()} fill="none" stroke="#d8300f" stroke-width="1.500" vector-effect="non-scaling-stroke"/>
            <path d="M1423 92.500H1512" fill="none" stroke="#d9452b" stroke-width="1.500" stroke-dasharray="4 4" vector-effect="non-scaling-stroke"/>
          </svg>
        </div>
        <div class="prices">
          ${PRICE_TICKS.map((p) => html`<span class="price-tick" style=${styleMap({ top: pct(Math.floor(priceY(p)), PLOT_H) })}>${p},000</span>`)}
          <span class="tag bid" style=${styleMap({ top: pct(LAST_LEVEL, PLOT_H) })}>846,614.438</span>
          <span class="tag offer" style=${styleMap({ top: pct(LAST_LEVEL, PLOT_H) })}>846,614.438</span>
        </div>
        <div class="times">
          ${TIME_TICKS.map(([x, label]) => html`<span class="time-tick" style=${styleMap({ left: pct(x, PLOT_W + 91) })}>${label}</span>`)}
        </div>
      </div>
    </section>`;
  }

  render() {
    return html`
      <svg class="defs" aria-hidden="true"><defs>
        <linearGradient id="gYellow"><stop offset="0" stop-color="#f6d162"/><stop offset="1" stop-color="#fff06a"/></linearGradient>
        <linearGradient id="gRed"><stop offset="0" stop-color="#e65055"/><stop offset="1" stop-color="#fd6e70"/></linearGradient>
        <linearGradient id="gSky" x1="0" y1="0" x2="0" y2="1"><stop offset="0" stop-color="#b2e6ff"/><stop offset="1" stop-color="#9bd0f3"/></linearGradient>
        <linearGradient id="gBlueArrow" x1="0" y1="0" x2="0" y2="1"><stop offset="0" stop-color="#b5dbf5"/><stop offset="1" stop-color="#7fb5dd"/></linearGradient>
        <linearGradient id="gCase" x1="0" y1="0" x2="0" y2="1"><stop offset="0" stop-color="#aad4fb"/><stop offset="1" stop-color="#8ec2ec"/></linearGradient>
        <linearGradient id="gGlass" x1="0" y1="0" x2="0" y2="1"><stop offset="0" stop-color="#f2f5f7"/><stop offset="1" stop-color="#dbe2e7"/></linearGradient>
      </defs></svg>
      <div class="desktop">
        <main class="window">
          <header class="titlebar">
            <div class="lights">
              <button class="light close" type="button" aria-label="Close window"></button>
              <button class="light mini" type="button" aria-label="Minimize window"></button>
              <button class="light zoom" type="button" aria-label="Zoom window"></button>
            </div>
            <h1 class="title">EXANTE ATP</h1>
          </header>
          <nav class="toolbar">
            <div class="tools main">${TOOLS.map((t) => this.tool(t))}</div>
            <div class="tools aux">${HELP_TOOLS.map((t) => this.tool(t))}</div>
          </nav>
          <div class="dock">
            <div class="side">${this.instruments()}${this.ticket()}</div>
            ${this.chart()}
          </div>
          <footer class="statusbar">
            <span>15:57 GMT+03</span>
            <svg width="26" height="26" viewBox="0 0 26 26" aria-hidden="true">
              <rect x="1" y="1.500" width="15" height="11" fill="#82e68d" stroke="#3d7f52" stroke-width="1.600"/>
              <path d="M5 15.500H10V13" fill="none" stroke="#3d7f52" stroke-width="2"/>
              <rect x="10" y="10.500" width="15" height="11" fill="#82e68d" stroke="#3d7f52" stroke-width="1.600"/>
              <path d="M17.500 22V24M13.500 25H21.500" stroke="#3d7f52" stroke-width="2.200"/>
            </svg>
          </footer>
        </main>
      </div>`;
  }
}
